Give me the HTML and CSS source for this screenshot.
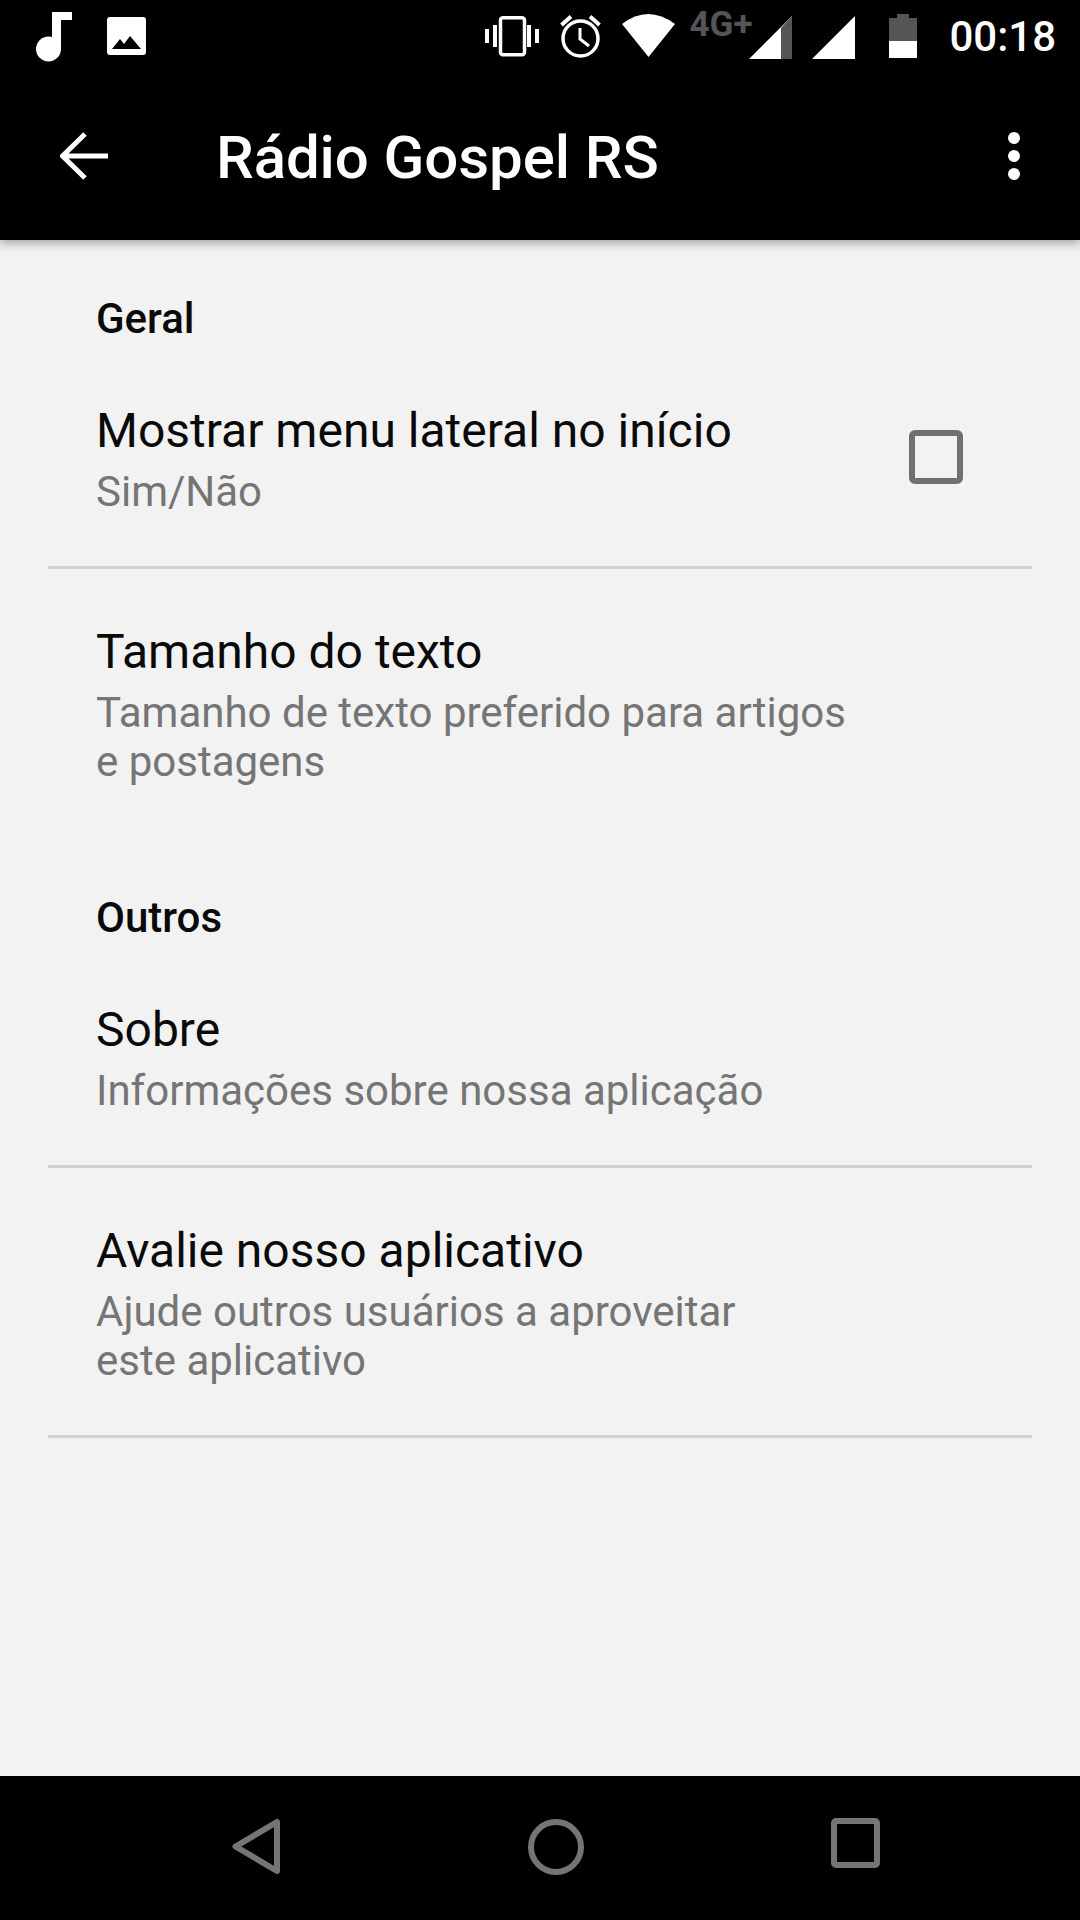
FILE: index.html
```html
<!DOCTYPE html>
<html lang="pt">
<head>
<meta charset="utf-8">
<title>Rádio Gospel RS</title>
<link rel="stylesheet" href="styles.css">
</head>
<body>
<div class="screen">
  <header class="appbar">
    <div class="status">
      <div class="status-left">
        <svg class="ic" width="71" height="72" viewBox="0 0 71 72"><circle cx="12.5" cy="49" r="12.5" fill="#fff"/><path d="M16 12h20v8H25v29h-9z" fill="#fff"/></svg>
        <svg class="ic" width="39" height="72" viewBox="0 0 39 72"><rect x="0" y="17" width="39" height="38" rx="3" fill="#fff"/><path d="M5 49l8-10 4 5 6-8 11 13z" fill="#000"/></svg>
      </div>
      <div class="status-right">
        <svg class="ic" width="75" height="72" viewBox="0 0 75 72" fill="#fff"><rect x="15.5" y="17.8" width="24" height="37" rx="2.5" fill="none" stroke="#fff" stroke-width="3.5"/><rect x="0" y="29" width="4" height="14"/><rect x="8" y="25" width="4" height="22"/><rect x="42" y="25" width="4" height="22"/><rect x="50" y="29" width="4" height="14"/></svg>
        <svg class="ic" width="62" height="72" viewBox="0 0 62 72" fill="none" stroke="#fff"><circle cx="20.5" cy="38.5" r="17.5" stroke-width="3.5"/><path d="M1.5 25L11 16.500M39.500 25L30 16.500" stroke-width="4"/><path d="M20 28v11l9 7" stroke-width="3"/></svg>
        <svg class="ic" width="67" height="72" viewBox="0 0 67 72"><path d="M0 24Q26 4 53 24L26.500 57z" fill="#fff"/></svg>
        <span class="net">4G+</span>
        <svg class="ic" width="63" height="72" viewBox="0 0 63 72"><path d="M43 16v43H0z" fill="#fff"/><path d="M43 16v43H32V28z" fill="#555"/></svg>
        <svg class="ic" width="77" height="72" viewBox="0 0 77 72"><path d="M43 16v43H0z" fill="#fff"/></svg>
        <svg class="ic" width="60" height="72" viewBox="0 0 60 72"><path d="M8 14h12v4h8v23H0V18h8z" fill="#555"/><rect x="0" y="41" width="28" height="17" fill="#fff"/></svg>
        <span class="clock">00:18</span>
      </div>
    </div>
    <div class="toolbar">
      <svg class="back" width="48" height="48" viewBox="0 0 48 48" fill="none" stroke="#fff" stroke-width="5"><path d="M1 24h47M25 2L2.500 24 25 46"/></svg>
      <h1 class="title">Rádio Gospel RS</h1>
      <svg class="more" width="12" height="48" viewBox="0 0 12 48" fill="#fff"><circle cx="6" cy="6" r="6"/><circle cx="6" cy="24" r="6"/><circle cx="6" cy="42" r="6"/></svg>
    </div>
  </header>

  <main class="list">
    <section class="group">
      <h2 class="group-title">Geral</h2>
      <div class="item item-check">
        <div>
          <div class="item-title">Mostrar menu lateral no início</div>
          <div class="item-sub">Sim/Não</div>
        </div>
        <span class="checkbox"></span>
      </div>
      <div class="item item-last">
        <div class="item-title">Tamanho do texto</div>
        <div class="item-sub">Tamanho de texto preferido para artigos<br>e postagens</div>
      </div>
    </section>
    <section class="group">
      <h2 class="group-title">Outros</h2>
      <div class="item">
        <div class="item-title">Sobre</div>
        <div class="item-sub">Informações sobre nossa aplicação</div>
      </div>
      <div class="item">
        <div class="item-title">Avalie nosso aplicativo</div>
        <div class="item-sub">Ajude outros usuários a aproveitar<br>este aplicativo</div>
      </div>
    </section>
  </main>

  <nav class="navbar">
    <svg width="48" height="144" viewBox="0 0 48 144" fill="none" stroke="#757575" stroke-width="6" stroke-linejoin="round"><path d="M3.500 70.500L45 46v49z"/></svg>
    <svg width="56" height="144" viewBox="0 0 56 144" fill="none" stroke="#757575" stroke-width="6"><circle cx="28" cy="71" r="25"/></svg>
    <svg width="49" height="144" viewBox="0 0 49 144" fill="none" stroke="#757575" stroke-width="6"><rect x="3" y="45" width="43" height="44" rx="2"/></svg>
  </nav>
</div>
</body>
</html>
```

FILE: styles.css
```css
* { box-sizing: border-box; }

html, body {
  margin: 0;
  padding: 0;
  background: #f2f2f2;
}

.screen {
  width: 1080px;
  height: 1920px;
  display: flex;
  flex-direction: column;
  overflow: hidden;
  font-family: Roboto, "Noto Sans", sans-serif;
}

.appbar {
  height: 240px;
  flex: none;
  background: #000;
  color: #fff;
  box-shadow: 0 3px 10px rgba(0, 0, 0, 0.35);
  position: relative;
  z-index: 1;
}

.status {
  height: 72px;
  display: flex;
  justify-content: space-between;
}

.status-left {
  display: flex;
  padding-left: 36px;
}

.status-right {
  display: flex;
  padding-right: 24px;
}

.ic {
  display: block;
  flex: none;
}

.net {
  width: 60px;
  font-size: 35px;
  font-weight: 700;
  line-height: 50px;
  color: #555;
  white-space: nowrap;
}

.clock {
  font-size: 42px;
  font-weight: 500;
  line-height: 74px;
  white-space: nowrap;
}

.toolbar {
  height: 168px;
  display: flex;
  align-items: center;
  padding: 0 60px 0 60px;
}

.back,
.more {
  flex: none;
}

.title {
  margin: 4px 0 0 108px;
  font-size: 60px;
  font-weight: 500;
  line-height: 72px;
  letter-spacing: -0.1px;
  flex: 1;
}

.list {
  flex: 1;
  padding: 0 48px;
  color: #0a0a0a;
}

.group-title {
  margin: 0 0 6px;
  padding-left: 48px;
  font-size: 42px;
  font-weight: 500;
  line-height: 48px;
}

.group:first-child {
  padding-top: 55px;
}

.group + .group {
  margin-top: 58px;
}

.item {
  padding: 46px 0 50px 48px;
  border-bottom: 3px solid #d2d2d2;
}

.item + .item {
  padding-top: 47px;
}

.item-last {
  border-bottom: 0;
}

.item-check {
  display: flex;
  align-items: center;
  justify-content: space-between;
  padding-right: 69px;
}

.item-title {
  font-size: 48px;
  line-height: 72px;
}

.item-sub {
  font-size: 42px;
  line-height: 49px;
  color: #757575;
}

.checkbox {
  width: 54px;
  height: 54px;
  margin-top: 2px;
  border: 6px solid #707070;
  border-radius: 6px;
  flex: none;
}

.navbar {
  height: 144px;
  flex: none;
  background: #000;
  display: flex;
  justify-content: space-between;
  padding: 0 200px 0 232px;
}
```
